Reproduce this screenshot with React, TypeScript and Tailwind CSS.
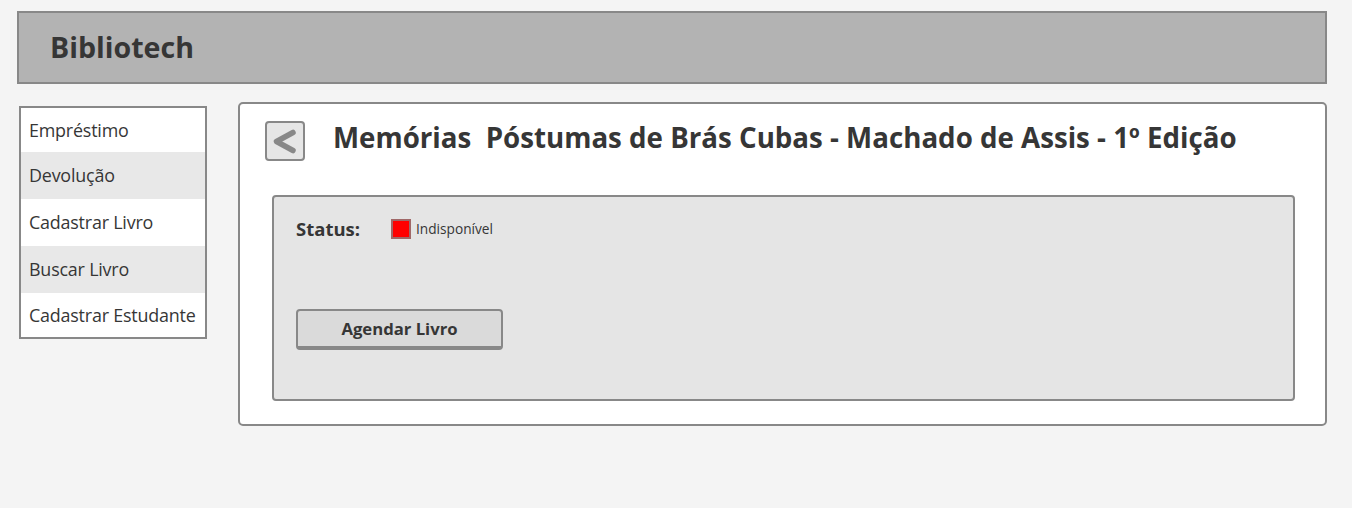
const menuItems = [
  { label: 'Empréstimo', shaded: false, height: 'h-[44px]' },
  { label: 'Devolução', shaded: true, height: 'h-[47px]' },
  { label: 'Cadastrar Livro', shaded: false, height: 'h-[47px]' },
  { label: 'Buscar Livro', shaded: true, height: 'h-[47px]' },
  { label: 'Cadastrar Estudante', shaded: false, height: 'h-[44px]' },
];

const BackArrow = () => (
  <svg width="36" height="36" viewBox="0 0 36 36" fill="none">
    <path d="M26 9.5 L9.5 18.5 L26 27.5" stroke="#888888" strokeWidth="5.5" strokeLinecap="round" strokeLinejoin="round" />
  </svg>
);

const App = () => {
  return (
    <div
      className="min-h-[508px] bg-[#f4f4f4] px-[17px] pt-[11px] text-[#363636]"
      style={{ fontFamily: '"Open Sans", sans-serif' }}
    >
      {/* Header */}
      <div className="flex h-[73px] w-[1310px] items-center border-2 border-[#888888] bg-[#b3b3b3] pl-[31px]">
        <h1 className="text-[28.6px] font-bold leading-none">Bibliotech</h1>
      </div>

      <div className="mt-[18px] flex items-start">
        {/* Sidebar */}
        <div className="ml-[2px] mt-[4px] w-[188px] border-2 border-[#888888] bg-white">
          {menuItems.map((item) => (
            <div
              key={item.label}
              className={`flex ${item.height} items-center pl-[8px] text-[17.9px] tracking-[-0.2px] ${item.shaded ? 'bg-[#e8e8e8]' : 'bg-white'}`}
            >
              {item.label}
            </div>
          ))}
        </div>

        {/* Main card */}
        <div className="ml-[31px] h-[324px] w-[1089px] rounded-[5px] border-2 border-[#888888] bg-white pl-[32px] pr-[30px] pt-[17px]">
          <div className="flex items-start">
            <button className="-ml-[7px] flex h-[40px] w-[40px] items-center justify-center rounded-[4px] border-2 border-[#888888] bg-[#e6e6e6]">
              <BackArrow />
            </button>
            <h2 className="ml-[28px] text-[27.7px] font-bold leading-[32px]">
              Memórias&nbsp; Póstumas de Brás Cubas - Machado de Assis - 1º Edição
            </h2>
          </div>

          {/* Details panel */}
          <div className="mt-[34px] h-[206px] rounded-[4px] border-2 border-[#888888] bg-[#e5e5e5] px-[22px] pt-[18px]">
            <div className="flex items-center">
              <span className="w-[95px] text-[18.5px] font-bold">Status:</span>
              <span className="h-[20px] w-[20px] border-2 border-[#a06868] bg-[#ff0000]" />
              <span className="ml-[5px] text-[13.7px]">Indisponível</span>
            </div>
            <button className="mt-[66px] h-[41px] w-[207px] rounded-[4px] border-2 border-b-[4px] border-[#888888] bg-[#dadada] text-[16.7px] font-bold">
              Agendar Livro
            </button>
          </div>
        </div>
      </div>
    </div>
  );
};

export default App;
